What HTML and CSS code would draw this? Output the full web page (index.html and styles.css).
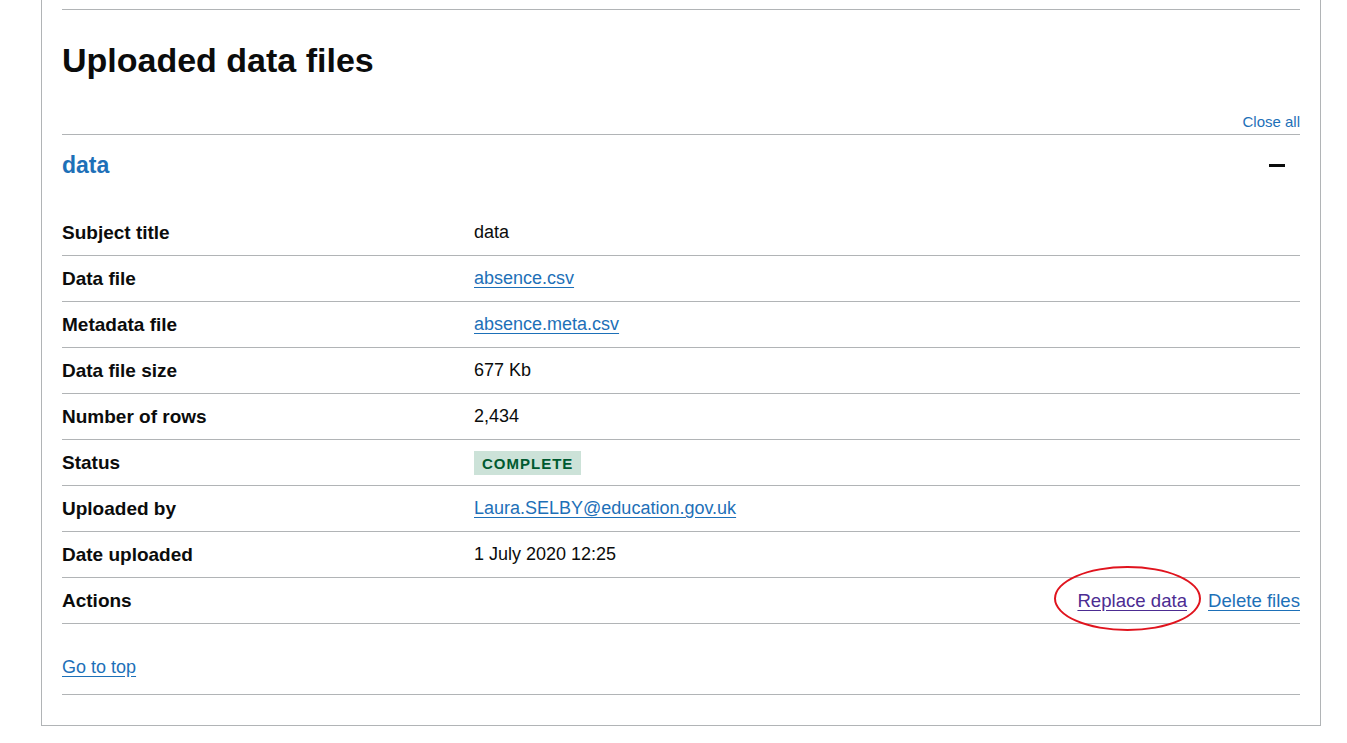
FILE: index.html
```html
<!DOCTYPE html>
<html lang="en">
<head>
<meta charset="utf-8">
<title>Uploaded data files</title>
<link rel="stylesheet" href="styles.css">
</head>
<body>
<div class="panel">
  <div class="section">
    <h2 class="heading">Uploaded data files</h2>
    <div class="accordion-controls"><a href="#" class="link-small">Close all</a></div>
    <div class="accordion">
      <div class="acc-header">
        <h3 class="acc-title">data</h3>
        <span class="acc-icon"></span>
      </div>
      <dl class="summary">
        <div class="row"><dt>Subject title</dt><dd>data</dd></div>
        <div class="row"><dt>Data file</dt><dd><a href="#" class="link">absence.csv</a></dd></div>
        <div class="row"><dt>Metadata file</dt><dd><a href="#" class="link">absence.meta.csv</a></dd></div>
        <div class="row"><dt>Data file size</dt><dd>677 Kb</dd></div>
        <div class="row"><dt>Number of rows</dt><dd>2,434</dd></div>
        <div class="row"><dt>Status</dt><dd><strong class="tag">Complete</strong></dd></div>
        <div class="row"><dt>Uploaded by</dt><dd><a href="#" class="link">Laura.SELBY@education.gov.uk</a></dd></div>
        <div class="row"><dt>Date uploaded</dt><dd>1 July 2020 12:25</dd></div>
        <div class="row"><dt>Actions</dt><dd class="actions"><span class="highlight"><a href="#" class="link visited">Replace data</a><span class="ring"></span></span><a href="#" class="link">Delete files</a></dd></div>
      </dl>
    </div>
    <div class="back-top"><a href="#" class="link">Go to top</a></div>
  </div>
</div>
</body>
</html>
```
FILE: styles.css
```css
html, body { margin: 0; padding: 0; background: #fff; }
body { font-family: "Liberation Sans", Arial, sans-serif; color: #0b0c0c; }
.panel {
  margin-left: 41px;
  width: 1238px;
  padding: 9px 20px 30px 20px;
  border: 1px solid #b1b4b6;
  border-top: none;
}
.section { border-top: 1px solid #b1b4b6; }
.heading {
  margin: 0;
  padding-top: 30px;
  font-size: 34px;
  line-height: 40px;
  font-weight: 700;
  height: 62px;
}
.accordion-controls {
  display: flex;
  justify-content: flex-end;
  height: 30px;
  align-items: flex-end;
  padding-bottom: 2px;
}
.link-small { font-size: 15px; color: #1d70b8; text-decoration: none; line-height: 20px; }
.accordion { border-top: 1px solid #b1b4b6; }
.acc-header {
  display: flex;
  justify-content: space-between;
  align-items: center;
  height: 60px;
  padding-bottom: 15px;
}
.acc-title { margin: 0; font-size: 23px; font-weight: 700; color: #1d70b8; }
.acc-icon { width: 16px; height: 3px; background: #0b0c0c; margin-right: 15px; }
.summary { margin: 0; }
.row {
  display: flex;
  border-bottom: 1px solid #b1b4b6;
  height: 45px;
  align-items: center;
  font-size: 18px;
}
.row dt { width: 412px; font-weight: 700; margin: 0; font-size: 19px; }
.row dd { margin: 0; flex: 1; }
.link { color: #1d70b8; text-decoration: underline; text-underline-offset: 3px; }
.link.visited { color: #4c2c92; }
.tag {
  display: inline-block;
  background: #cce2d8;
  color: #005a30;
  font-weight: 700;
  font-size: 15px;
  letter-spacing: 1px;
  text-transform: uppercase;
  padding: 4px 8px 3px 8px;
  line-height: 17px;
}
.actions { display: flex; justify-content: flex-end; gap: 21px; font-size: 18.6px; }
.highlight { position: relative; }
.ring {
  position: absolute;
  left: -23px;
  top: -24px;
  width: 143px;
  height: 61px;
  border: 2.5px solid #e0141e;
  border-radius: 50%;
  pointer-events: none;
}
.back-top {
  height: 37px;
  padding-top: 33px;
  border-bottom: 1px solid #b1b4b6;
  font-size: 18px;
  line-height: 20px;
}
```
